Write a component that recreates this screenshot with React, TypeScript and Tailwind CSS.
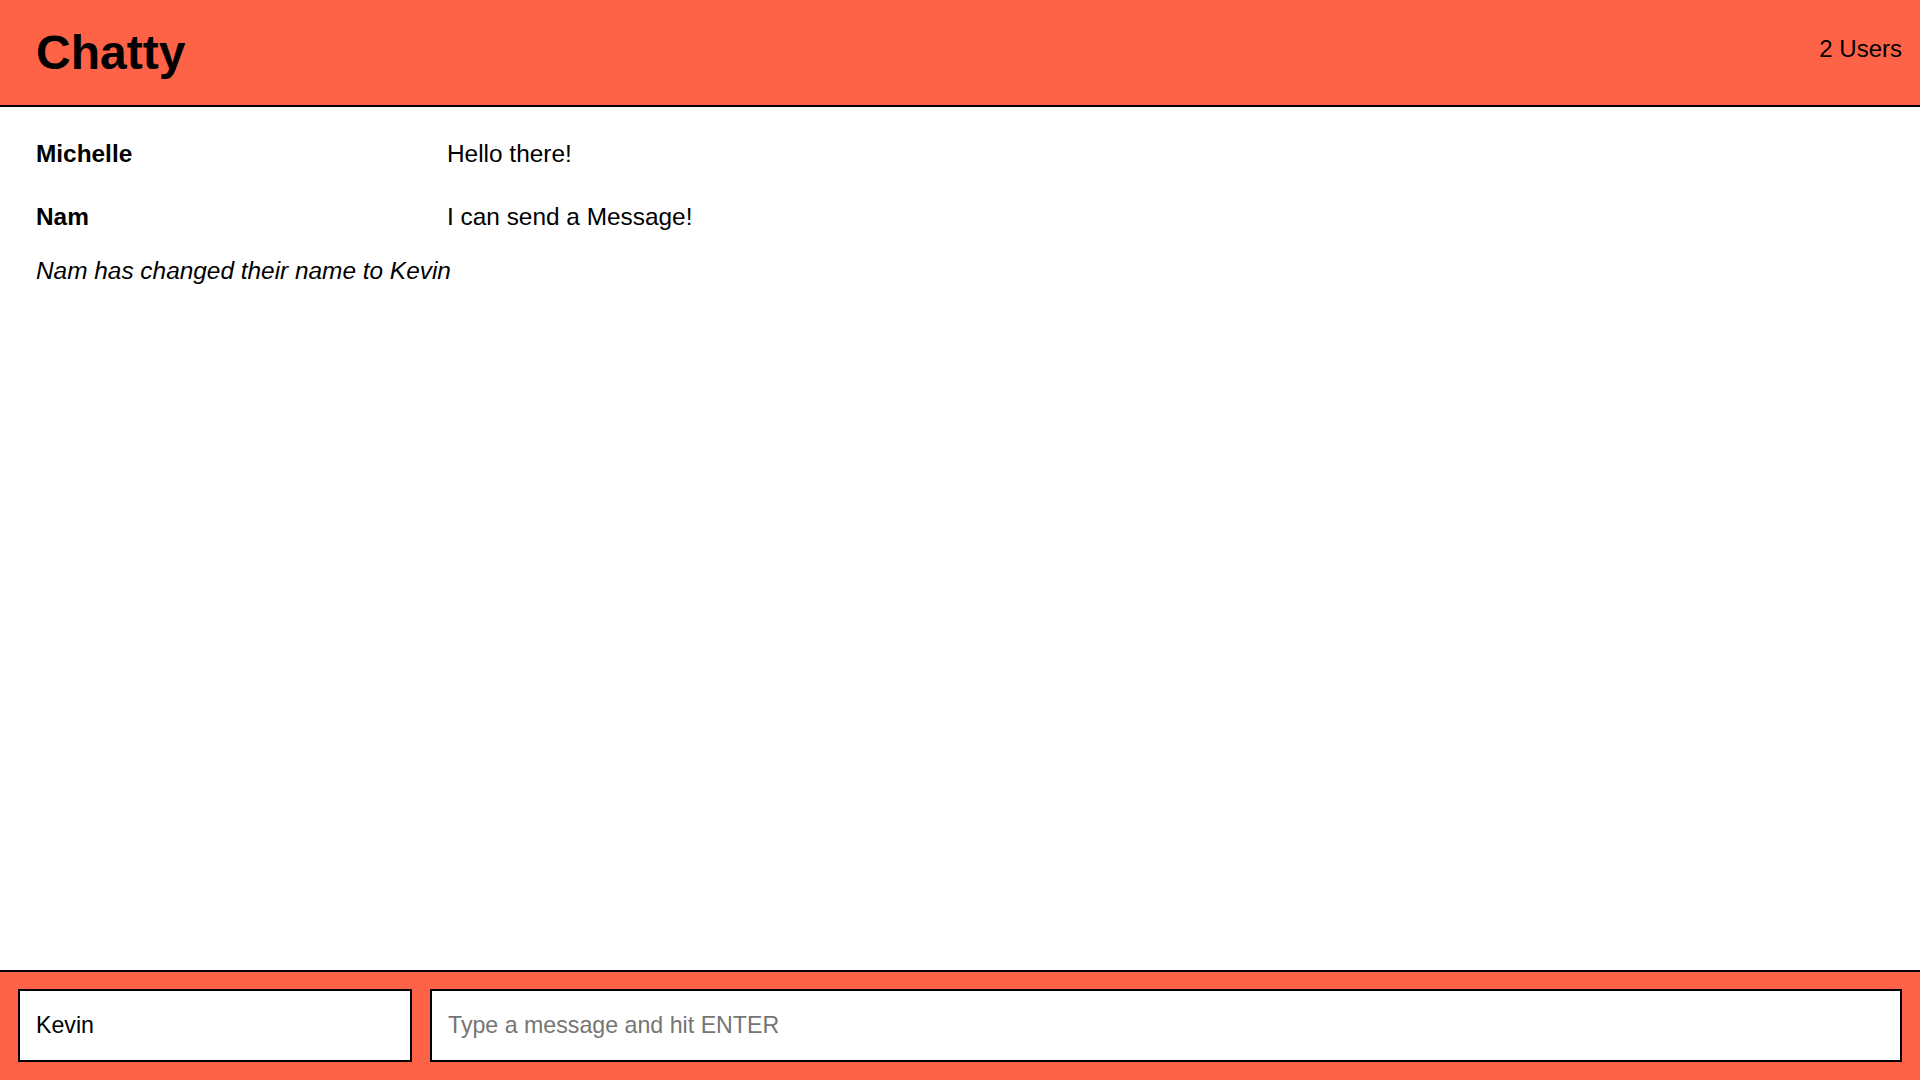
import { useState } from "react";

type Msg =
  | { kind: "message"; username: string; content: string }
  | { kind: "notification"; content: string };

const messages: Msg[] = [
  { kind: "message", username: "Michelle", content: "Hello there!" },
  { kind: "message", username: "Nam", content: "I can send a Message!" },
  { kind: "notification", content: "Nam has changed their name to Kevin" },
];

export default function App() {
  const [name, setName] = useState("Kevin");
  const [text, setText] = useState("");

  return (
    <div className="flex h-screen flex-col bg-white font-['Liberation_Sans',Arial,sans-serif] text-black">
      <nav className="flex h-[107px] shrink-0 items-start justify-between border-b-2 border-black bg-[#ff6347] pl-[36px] pr-[18px]">
        <a className="mt-[26px] text-[48px] font-bold leading-[54px]">Chatty</a>
        <span className="mt-[35px] text-[24px] leading-[28px]">2 Users</span>
      </nav>

      <main className="flex-1 overflow-auto px-[36px] pt-[33px]">
        {messages.map((m, i) =>
          m.kind === "message" ? (
            <div key={i} className="mb-[35px] flex text-[24.4px] leading-[28px]">
              <span className="w-[411px] shrink-0 font-bold">{m.username}</span>
              <span>{m.content}</span>
            </div>
          ) : (
            <div key={i} className="-mt-[9px] text-[24.4px] italic leading-[28px]">
              {m.content}
            </div>
          )
        )}
      </main>

      <footer className="flex h-[110px] shrink-0 gap-[18px] border-t-2 border-black bg-[#ff6347] px-[18px] pb-[18px] pt-[17px]">
        <input
          value={name}
          onChange={(e) => setName(e.target.value)}
          placeholder="Your Name (Optional)"
          className="h-[73px] w-[394px] border-2 border-black bg-white px-[16px] text-[23.2px] outline-none"
        />
        <input
          value={text}
          onChange={(e) => setText(e.target.value)}
          placeholder="Type a message and hit ENTER"
          className="h-[73px] flex-1 border-2 border-black bg-white px-[16px] text-[23.2px] outline-none placeholder:text-[#757575]"
        />
      </footer>
    </div>
  );
}
